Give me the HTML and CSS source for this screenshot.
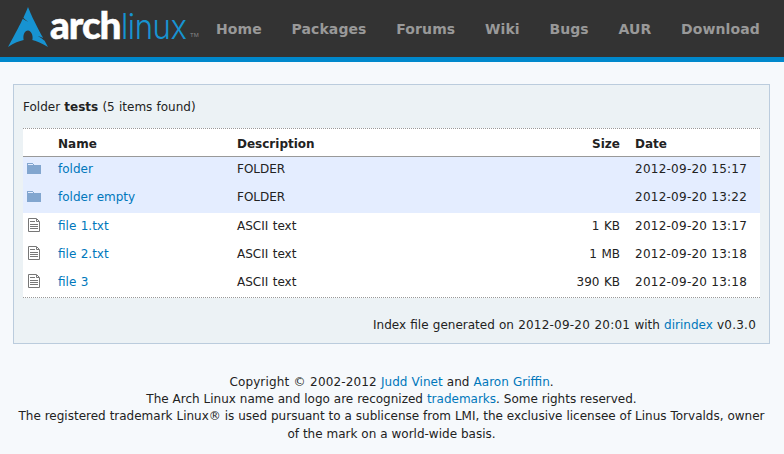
FILE: index.html
```html
<!DOCTYPE html>
<html lang="en">
<head>
<meta charset="utf-8">
<title>Folder tests</title>
<link rel="stylesheet" href="styles.css">
</head>
<body>
<svg class="sprite" aria-hidden="true">
  <symbol id="folder" viewBox="0 0 14 11"><path fill="#82a6cf" d="M0 0h6v1h1v1h7v9H0z"/><path fill="#e4edff" d="M1 1h5v1H1z"/></symbol>
  <symbol id="file" viewBox="0 0 12 14"><path fill="#fff" stroke="#777" d="M.5.5h8l3 3v10H.5z"/><path fill="none" stroke="#777" d="M8.500 1v2.500H11M2 3.500h5M2 6.500h8M2 8.500h8M2 10.500h8"/></symbol>
</svg>
<header class="top">
  <a class="logo">
    <svg width="200" height="57" viewBox="0 0 200 57">
      <path fill="#1793d1" d="M28 7C26.500 11 25.300 13.600 23.400 17.700c1.200 1.200 2.600 2.600 4.900 4.200-2.500-1-4.200-2-5.500-3.100C20.400 24 16.500 31.500 8 47c6.200-3.800 11.200-6 15.700-6.900-.2-.9-.3-1.700-.3-2.700 0-4 2.100-7.200 4.700-7s4.700 3.700 4.500 7.700c0 .7-.1 1.400-.3 2C36.800 41 41.700 43.400 48 47l-3.400-6.300c-1.700-1.300-3.400-3-7-4.800 2.400.6 4.200 1.400 5.600 2.200C33 19 32 16.500 28 7z"/>
      <text class="arch" x="50" y="39" textLength="70.500" lengthAdjust="spacingAndGlyphs">arch</text>
      <text class="linux" x="121" y="39" textLength="65.500" lengthAdjust="spacingAndGlyphs">linux</text>
      <text class="tm" x="190" y="37">TM</text>
    </svg>
  </a>
  <nav class="nav"><a>Home</a><a>Packages</a><a>Forums</a><a>Wiki</a><a>Bugs</a><a>AUR</a><a>Download</a></nav>
</header>
<main class="box">
  <p class="summary">Folder <b>tests</b> (5 items found)</p>
  <table class="list">
    <thead><tr><th class="icon"></th><th class="name">Name</th><th class="desc">Description</th><th class="size">Size</th><th class="date">Date</th></tr></thead>
    <tbody>
      <tr class="dir"><td><svg class="ic-dir"><use href="#folder"/></svg></td><td><a>folder</a></td><td>FOLDER</td><td></td><td>2012-09-20 15:17</td></tr>
      <tr class="dir"><td><svg class="ic-dir"><use href="#folder"/></svg></td><td><a>folder empty</a></td><td>FOLDER</td><td></td><td>2012-09-20 13:22</td></tr>
      <tr><td><svg class="ic-file"><use href="#file"/></svg></td><td><a>file 1.txt</a></td><td>ASCII text</td><td class="size">1 KB</td><td>2012-09-20 13:17</td></tr>
      <tr><td><svg class="ic-file"><use href="#file"/></svg></td><td><a>file 2.txt</a></td><td>ASCII text</td><td class="size">1 MB</td><td>2012-09-20 13:18</td></tr>
      <tr><td><svg class="ic-file"><use href="#file"/></svg></td><td><a>file 3</a></td><td>ASCII text</td><td class="size">390 KB</td><td>2012-09-20 13:18</td></tr>
    </tbody>
  </table>
  <p class="generated">Index file generated on <span class="num">2012-09-20 20:01</span> with <a>dirindex</a> <span class="num">v0.3.0</span></p>
</main>
<footer class="foot">
  <p class="copy"><span class="num">Copyright © 2002-2012</span> <a>Judd Vinet</a> and <a>Aaron Griffin</a>.</p>
  <p>The Arch Linux name and logo are recognized <a>trademarks</a>. Some rights reserved.</p>
  <p>The registered trademark Linux® is used pursuant to a sublicense from LMI, the exclusive licensee of Linus Torvalds, owner<br>of the mark on a world-wide basis.</p>
</footer>
</body>
</html>
```
FILE: styles.css
```css
body { margin: 0; background: #f6f9fc; color: #222; font: 12px/17px "DejaVu Sans", sans-serif; overflow: hidden; }
p { margin: 0; }
a { color: #07b; }
.num { letter-spacing: .22px; }
.sprite { display: none; }
.top { display: flex; height: 57px; background: #333; border-bottom: 5px solid #08c; }
.logo { width: 200px; }
.logo svg { display: block; }
.arch { font: 900 37px Lato, sans-serif; letter-spacing: -1px; fill: #fff; stroke: #fff; stroke-width: .5px; }
.linux { font: 300 35px Inter, sans-serif; letter-spacing: -.5px; fill: #1793d1; }
.tm { font: 6px "Liberation Sans", sans-serif; fill: #888; }
.nav { display: flex; gap: 29.700px; padding-left: 16px; font-size: 14px; line-height: 58px; font-weight: bold; letter-spacing: .1px; }
.nav a { color: #999; white-space: nowrap; }
.box { box-sizing: border-box; height: 260px; margin: 22px 14px 0 13px; padding: 14px 9px 0; border: 1px solid #bcd; background: #ecf2f5; }
.summary { word-spacing: .4px; }
.list { width: 737px; margin-top: 12px; table-layout: fixed; border-collapse: separate; border-spacing: 0; background: #fff; border-top: 1px dotted #999; border-bottom: 1px dotted #999; }
.list th { box-sizing: border-box; height: 28px; padding: 3px 0 0; text-align: left; border-bottom: 1px solid #999; }
.list td { box-sizing: border-box; height: 28px; padding: 0 0 2px; word-spacing: .6px; }
.list .dir td { background: #e4edff; padding-bottom: 4px; word-spacing: 0; }
.list .icon { width: 35px; }
.list .name { width: 179px; }
.list .desc { width: 315px; }
.list th.size { width: 68px; }
.list .size { text-align: right; }
.list .date { width: 140px; padding-left: 15px; }
.list td:last-child { padding-left: 15px; letter-spacing: .25px; word-spacing: 0; }
.list svg { display: block; }
.ic-dir { width: 14px; height: 11px; margin: 0 0 2px 4px; }
.ic-file { width: 12px; height: 14px; margin: 0 0 2px 5px; }
.generated { padding: 19px 4px 0 0; text-align: right; word-spacing: .4px; }
.foot { margin-top: 29.700px; padding-right: 1px; line-height: 17.300px; text-align: center; white-space: nowrap; word-spacing: .1px; }
.copy { word-spacing: .4px; }
.copy .num { letter-spacing: .14px; }
```
